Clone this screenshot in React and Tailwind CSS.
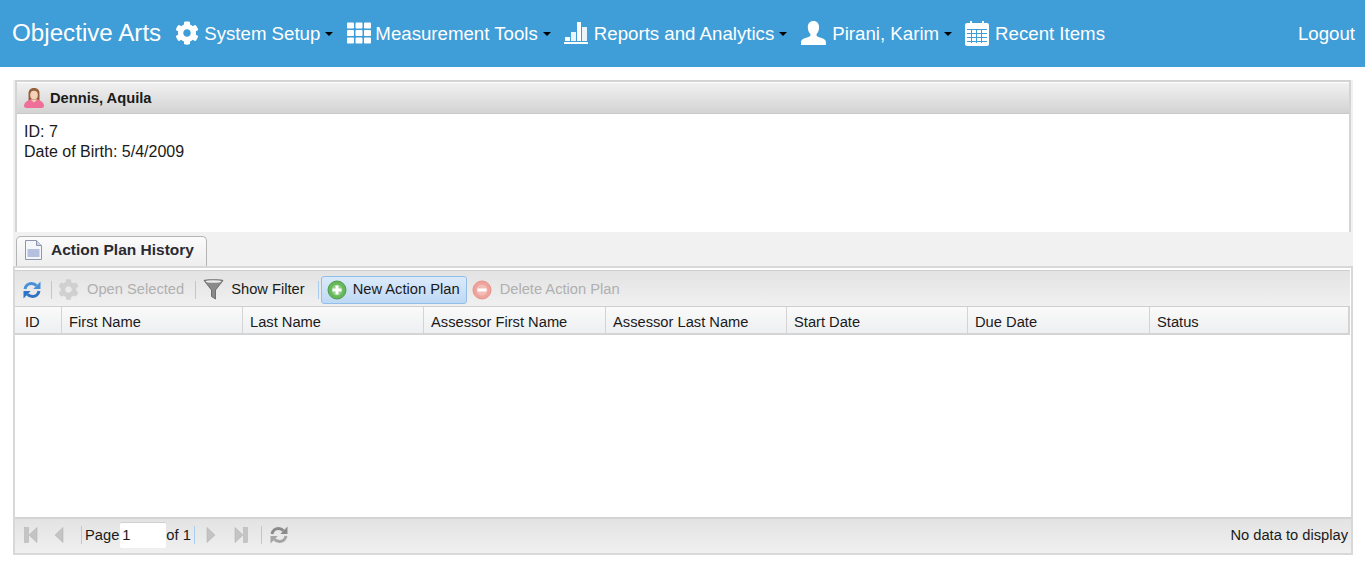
import { FaCog, FaTh } from 'react-icons/fa';

const columns = [
  { label: 'ID', w: 'w-[47px] pl-[10px]' },
  { label: 'First Name', w: 'w-[181px] pl-[7px]' },
  { label: 'Last Name', w: 'w-[181px] pl-[7px]' },
  { label: 'Assessor First Name', w: 'w-[182px] pl-[7px]' },
  { label: 'Assessor Last Name', w: 'w-[181px] pl-[7px]' },
  { label: 'Start Date', w: 'w-[181px] pl-[7px]' },
  { label: 'Due Date', w: 'w-[182px] pl-[7px]' },
  { label: 'Status', w: 'flex-1 pl-[7px]' },
];

function Caret() {
  return <span className="ml-[5px] mt-[1px] w-0 h-0 border-x-[4px] border-x-transparent border-t-[4px] border-t-black" />;
}

function BarsIcon() {
  return (
    <svg width="24" height="22" viewBox="0 0 24 22" fill="#fff">
      <rect x="0" y="20" width="24" height="2" />
      <rect x="1" y="15" width="5" height="4" />
      <rect x="7" y="10" width="5" height="9" fill="#eaf4fb" />
      <rect x="13" y="0" width="4" height="19" />
      <rect x="18" y="5" width="5" height="14" fill="#eaf4fb" />
    </svg>
  );
}

function PersonIcon() {
  return (
    <svg width="25" height="24" viewBox="0 0 25 24" fill="#fff">
      <path d="M12.500 0c3.600 0 5.600 2.600 5.600 6.200 0 2.800-1 5.400-2.600 7 0 1.400.5 2.100 2 2.700l4.400 1.700c1.900.8 3 2 3 3.600V24H0v-2.800c0-1.600 1.100-2.800 3-3.600l4.500-1.700c1.500-.6 2-1.300 2-2.700-1.600-1.600-2.700-4.200-2.700-7C6.800 2.600 8.900 0 12.500 0z" />
    </svg>
  );
}

function CalendarIcon() {
  return (
    <svg width="24" height="25" viewBox="0 0 24 25">
      <path fill="#fff" d="M2 2h3V0h2v2h10V0h2v2h3a2 2 0 0 1 2 2v19a2 2 0 0 1-2 2H2a2 2 0 0 1-2-2V4a2 2 0 0 1 2-2z" />
      <g fill="#3f9dd8">
        <rect x="2" y="8" width="20" height="1" />
        <rect x="2" y="12" width="20" height="1" />
        <rect x="2" y="16" width="20" height="1" />
        <rect x="2" y="20" width="20" height="1" />
        <rect x="6" y="8" width="1" height="14" />
        <rect x="11" y="8" width="1" height="14" />
        <rect x="16" y="8" width="1" height="14" />
      </g>
    </svg>
  );
}

function GirlIcon() {
  return (
    <svg width="20" height="20" viewBox="0 0 20 20">
      <path fill="#96603f" d="M10 0c4.200 0 5.500 2.600 5.500 5.500V13h-11V5.500C4.500 2.600 5.800 0 10 0z" />
      <ellipse cx="10" cy="7" rx="3.800" ry="4.300" fill="#f6d3b8" />
      <path fill="#ee7099" d="M0 18c0-3.500 3.500-5.500 6.500-6.200h7c3 .7 6.500 2.700 6.500 6.200 0 1.200-1 2-2.500 2h-15C1 20 0 19.200 0 18z" />
      <path fill="#f6d3b8" d="M6.500 11.500h7L10 14.500z" />
    </svg>
  );
}

function DocIcon() {
  return (
    <svg width="17" height="20" viewBox="0 0 17 20">
      <path fill="#f4f6fb" stroke="#8d96ac" d="M.5.500h11l5 5v14H.5z" />
      <path fill="#ccd3e6" stroke="#8d96ac" d="M11.500.500v5h5" />
      <rect x="2.500" y="9" width="12" height="8" fill="#b5c0de" />
    </svg>
  );
}

function RefreshIcon({ gray }) {
  const top = gray ? '#8b8b8b' : '#4a90d9';
  const bottom = gray ? '#a5a5a5' : '#2f74c4';
  return (
    <svg width="20" height="20" viewBox="0 0 20 20" fill="none" strokeWidth="3">
      <path stroke={top} d="M3 9c.6-3.400 3.400-5.500 6.500-5.500 2 0 3.800.8 5 2.200" />
      <path fill={top} d="M18.500 1.500V9h-7.200z" />
      <path stroke={bottom} d="M17 11c-.6 3.400-3.400 5.500-6.500 5.500-2 0-3.800-.8-5-2.200" />
      <path fill={bottom} d="M1.500 18.500V11h7.200z" />
    </svg>
  );
}

function FunnelIcon() {
  return (
    <svg width="21" height="22" viewBox="0 0 21 22">
      <path fill="#8a8a8a" stroke="#5c5c5c" strokeWidth="0.800" d="M1 1.500c0-1 19-1 19 0L12.500 11v9l-4-2.500V11z" />
      <ellipse cx="10.500" cy="2.500" rx="8" ry="1.300" fill="#ececec" />
    </svg>
  );
}

function RoundIcon({ fill, ring, plus }) {
  return (
    <svg width="20" height="20" viewBox="0 0 20 20">
      <circle cx="10" cy="10" r="9" fill={fill} stroke={ring} />
      <circle cx="10" cy="10" r="5.500" fill="#ffffff" fillOpacity="0.280" />
      <rect x="5.500" y="8.500" width="9" height="3" fill="#fff" />
      {plus && <rect x="8.500" y="5.500" width="3" height="9" fill="#fff" />}
    </svg>
  );
}

function PagerArrow({ dir, bar }) {
  return (
    <svg width="16" height="18" viewBox="0 0 16 18" fill="#c4c4c4" stroke="#afafaf" strokeWidth="0.500">
      {dir === 'left' ? <path d="M13 1.500v15L5 9z" /> : <path d="M3 1.500v15L11 9z" />}
      {bar && (dir === 'left' ? <rect x="0.500" y="1.500" width="4" height="15" /> : <rect x="11.500" y="1.500" width="4" height="15" />)}
    </svg>
  );
}

function Sep({ className = '' }) {
  return <span className={`w-px h-[18px] bg-[#a9cdf0] ${className}`} />;
}

function NavItem({ icon, label, caret, gap = 'ml-[6px]', className = '' }) {
  return (
    <div className={`flex items-center ${className}`}>
      {icon}
      <span className={gap}>{label}</span>
      {caret && <Caret />}
    </div>
  );
}

export default function App() {
  return (
    <div className="h-[566px] overflow-hidden bg-white font-['Liberation_Sans',Arial,sans-serif] text-[14.7px] text-[#1a1a1a]">
      <nav className="h-[67px] bg-[#3f9dd8] flex items-center pl-3 pr-[10px] text-white text-[18.66px]">
        <span className="text-[24.2px] mr-[14px]">Objective Arts</span>
        <div className="flex items-center gap-[14px]">
          <NavItem icon={<FaCog className="w-6 h-6" />} label="System Setup" gap="ml-[5px]" caret />
          <NavItem icon={<FaTh className="w-[24px] h-[24px]" />} label="Measurement Tools" gap="ml-[4px]" caret />
          <NavItem icon={<BarsIcon />} label="Reports and Analytics" className="-ml-px" caret />
          <NavItem icon={<PersonIcon />} label="Pirani, Karim" caret />
          <NavItem icon={<CalendarIcon />} label="Recent Items" className="-ml-px" />
        </div>
        <span className="ml-auto">Logout</span>
      </nav>

      <main className="mt-[13px] ml-[13px] w-[1340px] h-[475px] bg-[#f1f1f1] flex flex-col">
        <section className="ml-[2px] mr-[2px] h-[152px] border-x-2 border-t-2 border-[#d4d4d4] bg-white">
          <div className="h-[32px] flex items-center pl-[7px] bg-gradient-to-b from-[#f1f1f1] to-[#d3d3d3] border-b border-[#c8c8c8] border-t border-t-white font-bold">
            <GirlIcon />
            <span className="ml-[6px]">Dennis, Aquila</span>
          </div>
          <div className="px-[7px] pt-[8px] leading-[20px] text-[16px]">
            <div>ID: 7</div>
            <div>Date of Birth: 5/4/2009</div>
          </div>
        </section>

        <div className="h-[36px] flex items-end pl-[3px] border-b-2 border-[#d8d8d8]">
          <div className="h-[30px] w-[191px] flex items-center pl-[8px] pb-[3px] bg-gradient-to-b from-[#fbfbfb] to-[#eeeeee] border border-b-0 border-[#b4b4b4] rounded-t-[5px] font-bold text-[15.5px] text-[#2a2a33]">
            <DocIcon />
            <span className="ml-[9px]">Action Plan History</span>
          </div>
        </div>

        <section className="flex-1 border-2 border-t-0 border-[#d8d8d8] flex flex-col bg-white">
          <div className="mt-[2px] mr-px h-[37px] border-y border-[#cfcfcf] flex items-center pl-[7px] pt-[2px] bg-gradient-to-b from-[#e3e3e3] to-[#f0f0f0]">
            <RefreshIcon />
            <Sep className="ml-[9px]" />
            <FaCog className="ml-[6px] w-[21px] h-[21px] text-[#d0d0d0]" />
            <span className="ml-[8px] text-[#b0b0b0]">Open Selected</span>
            <Sep className="ml-[11px]" />
            <span className="ml-[7px]"><FunnelIcon /></span>
            <span className="ml-[7px]">Show Filter</span>
            <Sep className="ml-[13px]" />
            <div className="ml-[2px] h-[28px] w-[146px] flex items-center pl-[5px] rounded-[3px] border border-[#91bfea] bg-gradient-to-b from-[#dbeafa] to-[#bfd9f4]">
              <RoundIcon fill="#66b85a" ring="#4d9c47" plus />
              <span className="ml-[6px]">New Action Plan</span>
            </div>
            <span className="ml-[5px]"><RoundIcon fill="#eea49c" ring="#e59289" /></span>
            <span className="ml-[8px] text-[#b0b0b0]">Delete Action Plan</span>
          </div>

          <div className="h-[28px] mr-px flex border-b-2 border-[#d4d4d4] bg-gradient-to-b from-[#fafafa] to-[#eeeff1]">
            {columns.map((col) => (
              <div key={col.label} className={`${col.w} flex items-center pt-[5px] border-r border-[#d4d4d4] last:border-r-2`}>
                {col.label}
              </div>
            ))}
          </div>

          <div className="flex-1 bg-white" />

          <div className="h-[36px] border-t-2 border-t-[#d4d4d4] flex items-center pl-[9px] pr-[3px] pb-[2px] bg-gradient-to-b from-[#e3e3e3] to-[#f0f0f0]">
            <PagerArrow dir="left" bar />
            <span className="ml-[10px]"><PagerArrow dir="left" /></span>
            <Sep className="ml-[15px]" />
            <span className="ml-[3px]">Page</span>
            <div className="ml-px h-[26px] w-[46px] pl-[2px] flex items-center bg-white border-t border-[#cfcfcf] rounded-[2px]">1</div>
            <span>of 1</span>
            <Sep className="ml-[3px]" />
            <span className="ml-[9px]"><PagerArrow dir="right" /></span>
            <span className="ml-[12px]"><PagerArrow dir="right" bar /></span>
            <Sep className="ml-[13px]" />
            <span className="ml-[7px]"><RefreshIcon gray /></span>
            <span className="ml-auto">No data to display</span>
          </div>
        </section>
      </main>
    </div>
  );
}
